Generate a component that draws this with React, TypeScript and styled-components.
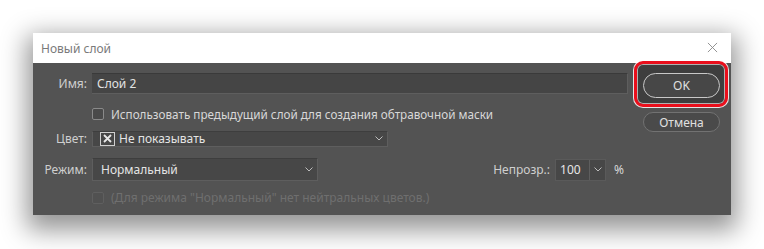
import styled, {createGlobalStyle, css} from "styled-components";

const GlobalStyle = createGlobalStyle`
    html, body {
        margin: 0;
        padding: 0;
        background: #fff;
    }
    body {
        font-family: "Noto Sans", "Open Sans", sans-serif;
    }
`

function App() {
    return (
        <>
            <GlobalStyle/>
            <Page>
                <Dialog>
                    <TitleBar>
                        <TitleText>Новый слой</TitleText>
                        <CloseIcon viewBox="0 0 12 12">
                            <path d="M1 1 L11 11 M11 1 L1 11" stroke="#8a8a8a" strokeWidth="1" fill="none"/>
                        </CloseIcon>
                    </TitleBar>
                    <Body>
                        <Form>
                            <Row $h={21}>
                                <Label>Имя:</Label>
                                <NameInput>Слой 2</NameInput>
                            </Row>
                            <Row $h={14} $mt={12}>
                                <span/>
                                <CheckLine $size={11.7}>
                                    <CheckBox/>
                                    <span>Использовать предыдущий слой для создания обтравочной маски</span>
                                </CheckLine>
                            </Row>
                            <Row $h={16} $mt={10}>
                                <Label>Цвет:</Label>
                                <Select $w={296} $h={16}>
                                    <SelectValue>
                                        <XBox>
                                            <svg width="9" height="9" viewBox="0 0 9 9">
                                                <path d="M1 1 L8 8 M8 1 L1 8" stroke="#e8e8e8" strokeWidth="1.8"/>
                                            </svg>
                                        </XBox>
                                        Не показывать
                                    </SelectValue>
                                    <Chevron/>
                                </Select>
                            </Row>
                            <Row $h={23} $mt={12}>
                                <Label>Режим:</Label>
                                <ModeLine>
                                    <Select $w={226} $h={23}>
                                        <SelectValue $pl={8}>Нормальный</SelectValue>
                                        <Chevron/>
                                    </Select>
                                    <Opacity>
                                        <OpacityLabel>Непрозр.:</OpacityLabel>
                                        <Spin>
                                            <SpinValue>100</SpinValue>
                                            <SpinButton><Chevron/></SpinButton>
                                        </Spin>
                                        <Percent>%</Percent>
                                    </Opacity>
                                </ModeLine>
                            </Row>
                            <Row $h={14} $mt={8}>
                                <span/>
                                <CheckLine $disabled>
                                    <CheckBox $disabled/>
                                    <span>(Для режима "Нормальный" нет нейтральных цветов.)</span>
                                </CheckLine>
                            </Row>
                        </Form>
                        <Buttons>
                            <Button $primary>OK</Button>
                            <Button>Отмена</Button>
                        </Buttons>
                    </Body>
                </Dialog>
            </Page>
        </>
    )
}

function Chevron() {
    return (
        <ChevronIcon viewBox="0 0 8 5">
            <path d="M0.5 0.5 L4 4 L7.5 0.5" stroke="#bdbdbd" strokeWidth="1" fill="none"/>
        </ChevronIcon>
    )
}

export default App

const Page = styled.div`
    width: 764px;
    height: 249px;
    padding: 33px 0 0 33px;
    box-sizing: border-box;
    background: #fff;
    overflow: hidden;
`

const Dialog = styled.div`
    width: 698px;
    height: 182px;
    display: flex;
    flex-direction: column;
    background: #535353;
    box-shadow: 0 9px 24px 6px rgba(0, 0, 0, 0.42);
`

const TitleBar = styled.div`
    height: 30px;
    flex: none;
    background: #fff;
    display: flex;
    align-items: center;
    justify-content: space-between;
    padding: 0 13px 0 8px;
`

const TitleText = styled.span`
    font-size: 12px;
    color: #7a7a7a;
`

const CloseIcon = styled.svg`
    width: 11px;
    height: 11px;
    margin-top: -2px;
`

const Body = styled.div`
    flex: 1;
    display: flex;
    padding: 10px 11px 0 0;
    gap: 15px;
    color: #d8d8d8;
    font-size: 12px;
`

const Form = styled.div`
    width: 595px;
    display: flex;
    flex-direction: column;
`

const Row = styled.div<{ $h: number; $mt?: number }>`
    display: grid;
    grid-template-columns: 54px 1fr;
    column-gap: 5px;
    align-items: center;
    height: ${p => p.$h}px;
    margin-top: ${p => p.$mt ?? 0}px;
`

const Label = styled.span`
    text-align: right;
    color: #cfcfcf;
    white-space: nowrap;
`

const NameInput = styled.div`
    height: 21px;
    box-sizing: border-box;
    background: #454545;
    border-top: 1px solid #3a3a3a;
    border-bottom: 1px solid #5e5e5e;
    border-right: 1px solid #5e5e5e;
    padding-left: 5px;
    display: flex;
    align-items: center;
    color: #e2e2e2;
`

const CheckLine = styled.div<{ $disabled?: boolean; $size?: number }>`
    display: flex;
    align-items: center;
    gap: 7px;
    white-space: nowrap;
    font-size: ${p => p.$size ?? 12}px;
    color: ${p => p.$disabled ? '#6f6f6f' : '#d8d8d8'};
`

const CheckBox = styled.span<{ $disabled?: boolean }>`
    width: 12px;
    height: 12px;
    box-sizing: border-box;
    border-radius: 2px;
    border: 1px solid #8a8a8a;
    background: #4a4a4a;

    ${p => p.$disabled && css`
        border-color: #5f5f5f;
        background: #515151;
    `}
`

const Select = styled.div<{ $w: number; $h: number }>`
    width: ${p => p.$w}px;
    height: ${p => p.$h}px;
    box-sizing: border-box;
    background: #474747;
    border: 1px solid #5e5e5e;
    border-top-color: #3e3e3e;
    display: flex;
    align-items: center;
    justify-content: space-between;
    padding-right: 4px;
`

const SelectValue = styled.div<{ $pl?: number }>`
    display: flex;
    align-items: center;
    gap: 4px;
    padding-left: ${p => p.$pl ?? 7}px;
    color: #e4e4e4;
`

const XBox = styled.span`
    width: 15px;
    height: 14px;
    box-sizing: border-box;
    border: 1px solid #d0d0d0;
    display: flex;
    align-items: center;
    justify-content: center;
`

const ChevronIcon = styled.svg`
    width: 8px;
    height: 5px;
`

const ModeLine = styled.div`
    display: flex;
    align-items: center;
    justify-content: space-between;
    padding-right: 4px;
`

const Opacity = styled.div`
    display: flex;
    align-items: center;
`

const OpacityLabel = styled.span`
    color: #cfcfcf;
    margin-right: 5px;
`

const Spin = styled.div`
    display: flex;
    height: 22px;
    box-sizing: border-box;
    border: 1px solid #5a5a5a;
    background: #474747;
`

const SpinValue = styled.span`
    width: 33px;
    display: flex;
    align-items: center;
    padding-left: 4px;
    box-sizing: border-box;
    color: #e6e6e6;
`

const SpinButton = styled.span`
    width: 15px;
    border-left: 1px solid #5e5e5e;
    display: flex;
    align-items: center;
    justify-content: center;
`

const Percent = styled.span`
    margin-left: 8px;
    color: #d8d8d8;
`

const Buttons = styled.div`
    position: relative;
    z-index: 0;
    width: 77px;
    display: flex;
    flex-direction: column;
    gap: 14px;
`

const Button = styled.button<{ $primary?: boolean }>`
    position: relative;
    width: 77px;
    height: 25px;
    border-radius: 13px;
    font: 12px "Noto Sans", "Open Sans", sans-serif;
    color: #e0e0e0;
    background: #4a4a4a;
    border: 1px solid #727272;
    padding: 0;

    ${p => p.$primary && css`
        border: 1.5px solid #c8c8c8;
        background: #474747;

        &::before {
            content: "";
            position: absolute;
            inset: -13px -9px -10px -10px;
            border: 3.5px solid #ea0f1c;
            border-radius: 9px;
            background: #3e3e3e;
            box-shadow: 0 0 0 1px rgba(255, 255, 255, 0.85), inset 0 0 0 1px rgba(255, 255, 255, 0.6);
            z-index: -1;
        }
    `}

    ${p => !p.$primary && css`
        height: 20px;
        border-radius: 10px;
    `}
`
